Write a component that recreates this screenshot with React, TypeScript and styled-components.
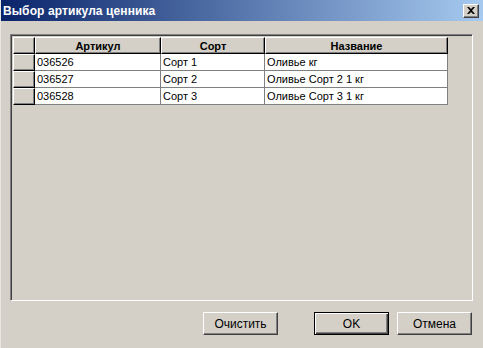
import React, { FC } from "react";
import styled, { createGlobalStyle } from "styled-components";

const GlobalStyle = createGlobalStyle`
  html, body {
    margin: 0;
    padding: 0;
    background: #d4d0c8;
  }
  body {
    font-family: "Liberation Sans", Arial, sans-serif;
  }
`;

interface Row {
  article: string;
  sort: string;
  name: string;
}

const rows: Row[] = [
  { article: "036526", sort: "Сорт 1", name: "Оливье кг" },
  { article: "036527", sort: "Сорт 2", name: "Оливье Сорт 2 1 кг" },
  { article: "036528", sort: "Сорт 3", name: "Оливье Сорт 3 1 кг" },
];

const Window = styled.div`
  width: 483px;
  height: 348px;
  box-sizing: border-box;
  background: #d4d0c8;
  border-left: 1px solid #e8e6e0;
  display: flex;
  flex-direction: column;
  overflow: hidden;
`;

const TitleBar = styled.div`
  height: 21px;
  flex-shrink: 0;
  display: flex;
  align-items: center;
  justify-content: space-between;
  padding: 0 4px 0 2px;
  background: linear-gradient(to right, #0a246a, #a6caf0);
`;

const Title = styled.span`
  color: #ffffff;
  font-weight: bold;
  font-size: 12px;
  letter-spacing: 0.1px;
`;

const CloseButton = styled.button`
  width: 16px;
  height: 14px;
  padding: 0;
  margin: 0;
  display: flex;
  align-items: center;
  justify-content: center;
  background: #d4d0c8;
  border: 1px solid;
  border-color: #ffffff #404040 #404040 #ffffff;
  box-shadow: inset -1px -1px 0 #808080;
`;

const Content = styled.div`
  flex: 1;
  display: flex;
  flex-direction: column;
  padding: 13px 10px 0 9px;
`;

const GridPanel = styled.div`
  height: 267px;
  box-sizing: border-box;
  border: 1px solid;
  border-color: #808080 #ffffff #ffffff #808080;
  box-shadow: inset 1px 1px 0 #404040;
  padding: 2px 0 0 2px;
`;

const Grid = styled.div`
  display: grid;
  grid-template-columns: 22px 126px 104px 183px;
  grid-auto-rows: 17px;
`;

const HeaderCell = styled.div`
  box-sizing: border-box;
  background: #d4d0c8;
  border-top: 1px solid #ffffff;
  border-left: 1px solid #ffffff;
  border-right: 1px solid #000000;
  border-bottom: 1px solid #000000;
  box-shadow: inset -1px -1px 0 #808080;
  font-size: 11px;
  font-weight: bold;
  color: #000000;
  display: flex;
  align-items: center;
  justify-content: center;
`;

const DataCell = styled.div`
  box-sizing: border-box;
  background: #ffffff;
  border-right: 1px solid #808080;
  border-bottom: 1px solid #808080;
  font-size: 11px;
  color: #000000;
  padding-left: 2px;
  display: flex;
  align-items: center;
  white-space: nowrap;
  overflow: hidden;
`;

const ButtonRow = styled.div`
  display: flex;
  justify-content: flex-end;
  align-items: center;
  margin-top: 11px;
  padding-right: 1px;
`;

const Button = styled.button<{ $default?: boolean; $gap?: number }>`
  width: 75px;
  height: 23px;
  margin-left: ${({ $gap }) => $gap ?? 0}px;
  box-sizing: border-box;
  background: #d4d0c8;
  font-family: "Liberation Sans", Arial, sans-serif;
  font-size: 12px;
  color: #000000;
  padding: 0;
  border: 1px solid;
  border-color: ${({ $default }) =>
    $default ? "#000000" : "#ffffff #404040 #404040 #ffffff"};
  box-shadow: ${({ $default }) =>
    $default
      ? "inset 1px 1px 0 #ffffff, inset -1px -1px 0 #404040, inset -2px -2px 0 #808080"
      : "inset -1px -1px 0 #808080"};
`;

const CloseIcon: FC = () => (
  <svg width="8" height="7" viewBox="0 0 8 7">
    <path d="M0 0h2l2 2 2-2h2L5 3.5 8 7H6L4 5 2 7H0l3-3.5z" fill="#000" />
  </svg>
);

const App: FC = () => (
  <>
    <GlobalStyle />
    <Window>
      <TitleBar>
        <Title>Выбор артикула ценника</Title>
        <CloseButton aria-label="Закрыть">
          <CloseIcon />
        </CloseButton>
      </TitleBar>
      <Content>
        <GridPanel>
          <Grid>
            <HeaderCell />
            <HeaderCell>Артикул</HeaderCell>
            <HeaderCell>Сорт</HeaderCell>
            <HeaderCell>Название</HeaderCell>
            {rows.map((r) => (
              <React.Fragment key={r.article}>
                <HeaderCell />
                <DataCell>{r.article}</DataCell>
                <DataCell>{r.sort}</DataCell>
                <DataCell>{r.name}</DataCell>
              </React.Fragment>
            ))}
          </Grid>
        </GridPanel>
        <ButtonRow>
          <Button>Очистить</Button>
          <Button $default $gap={36}>
            OK
          </Button>
          <Button $gap={8}>Отмена</Button>
        </ButtonRow>
      </Content>
    </Window>
  </>
);

export default App;
